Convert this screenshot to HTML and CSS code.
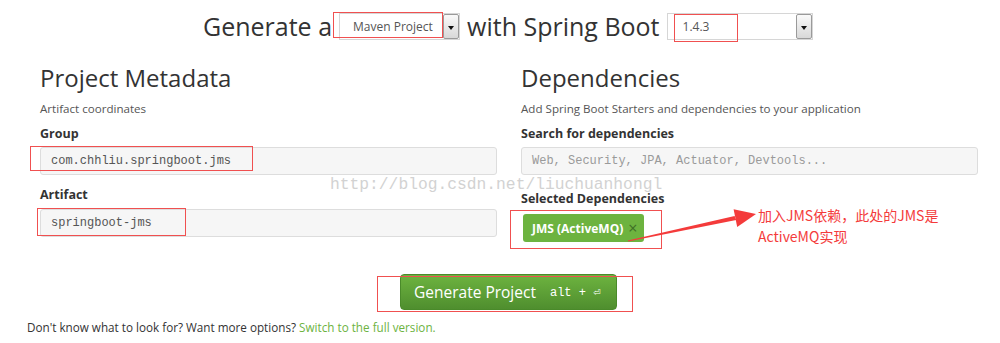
FILE: index.html
```html
<!DOCTYPE html>
<html lang="en">
<head>
  <meta charset="UTF-8" />
  <title>Spring Initializr</title>
  <link rel="stylesheet" href="styles.css">
</head>
<body>

  <div class="title">
    <span>Generate a</span>
    <div class="fake-select maven">
      <span class="value">Maven Project</span>
      <span class="arrow"></span>
    </div>
    <span>with Spring Boot</span>
    <div class="fake-select boot">
      <span class="value">1.4.3</span>
      <span class="arrow"></span>
    </div>
  </div>

  <div class="columns">
    <div class="col">
      <h1>Project Metadata</h1>
      <p class="hint">Artifact coordinates</p>
      <label class="field-label">Group</label>
      <div class="input">com.chhliu.springboot.jms</div>
      <label class="field-label second">Artifact</label>
      <div class="input artifact">springboot-jms</div>
    </div>
    <div class="col">
      <h1>Dependencies</h1>
      <p class="hint">Add Spring Boot Starters and dependencies to your application</p>
      <label class="field-label">Search for dependencies</label>
      <div class="input placeholder">Web, Security, JPA, Actuator, Devtools...</div>
      <label class="field-label selected">Selected Dependencies</label>
      <div class="tags">
        <span class="tag">JMS (ActiveMQ) <span class="close">×</span></span>
      </div>
    </div>
  </div>

  <div class="actions">
    <button class="generate"><span>Generate Project</span><span class="kbd">alt + ⏎</span></button>
  </div>

  <p class="footer">Don't know what to look for? Want more options? <a href="#">Switch to the full version.</a></p>

  <!-- annotations drawn over the screenshot -->
  <div class="watermark">http://blog.csdn.net/liuchuanhongl</div>
  <div class="mark m-maven"></div>
  <div class="mark m-boot"></div>
  <div class="mark m-group"></div>
  <div class="mark m-artifact"></div>
  <div class="mark m-tag"></div>
  <div class="mark m-button"></div>
  <svg class="arrow-svg" width="1000" height="343" viewBox="0 0 1000 343">
    <polygon points="628.1,241.5 627.9,240.5 734.6,216.1 736.2,220.1" fill="#f43b3b" />
    <polygon points="733.6,209.3 756,214 737.2,226.9" fill="#f43b3b" />
  </svg>
  <div class="note">加入JMS依赖，此处的JMS是<br>ActiveMQ实现</div>

</body>
</html>
```

FILE: styles.css
```css
body {
  margin: 0;
  font-family: 'Open Sans', sans-serif;
  color: #333;
  background: #fff;
  width: 1000px;
  height: 343px;
  position: relative;
  overflow: hidden;
}

.title {
  display: flex;
  align-items: center;
  margin-top: 12px;
  height: 28px;
  padding-left: 203px;
  font-size: 25px;
  color: #333;
}

.fake-select {
  display: flex;
  height: 27px;
  border: 1px solid #d6d6d6;
  box-sizing: border-box;
  background: #fff;
  font-size: 12px;
  color: #555;
}

.fake-select .value {
  flex: 1;
  display: flex;
  align-items: center;
  padding-left: 13px;
}

.fake-select .arrow {
  width: 14px;
  border: 1px solid #9a9a9a;
  border-radius: 2px;
  background: linear-gradient(#fafafa, #d8d8d8);
  position: relative;
}

.fake-select .arrow::after {
  content: "";
  position: absolute;
  left: 4px;
  top: 11px;
  border-left: 3px solid transparent;
  border-right: 3px solid transparent;
  border-top: 4px solid #111;
}

.maven {
  width: 121px;
  margin: 0 7px 0 7px;
}

.boot {
  width: 146px;
  margin-left: 7px;
}

.boot .value {
  padding-left: 15px;
}

.columns {
  display: grid;
  grid-template-columns: 457px 457px;
  column-gap: 24px;
  padding-left: 40px;
  margin-top: 24px;
}

h1 {
  margin: 0;
  font-size: 24px;
  line-height: 28px;
  font-weight: 400;
  color: #333;
}

.hint {
  margin: 9px 0 0;
  font-size: 11.6px;
  line-height: 16px;
  color: #555;
}

.field-label {
  display: block;
  margin-top: 9px;
  font-size: 12.5px;
  line-height: 16px;
  font-weight: 700;
  color: #333;
}

.field-label.second {
  margin-top: 12px;
}

.field-label.selected {
  margin-top: 16px;
}

.input {
  margin-top: 5px;
  height: 28px;
  box-sizing: border-box;
  border: 1px solid #ddd;
  border-radius: 3px;
  background: #f6f6f6;
  padding-left: 10px;
  display: flex;
  align-items: center;
  font-family: 'Liberation Mono', monospace;
  font-size: 12px;
  color: #555;
}

.input.artifact {
  margin-top: 6px;
}

.input.placeholder {
  color: #9a9a9a;
}

.tags {
  margin-top: 7px;
  padding-left: 2px;
}

.tag {
  display: inline-flex;
  align-items: center;
  height: 28px;
  padding: 0 7px 0 9px;
  border-radius: 3px;
  background: #6db33f;
  color: #fff;
  font-size: 12px;
  font-weight: 700;
}

.tag .close {
  margin-left: 5px;
  font-size: 16px;
  font-weight: 400;
  color: #3f6f26;
}

.actions {
  display: flex;
  justify-content: center;
  padding-left: 17px;
  margin-top: 32px;
}

.generate {
  display: flex;
  align-items: center;
  gap: 14px;
  width: 217px;
  height: 36px;
  border: 1px solid #4a8a2a;
  border-radius: 4px;
  background: linear-gradient(#6db33f, #4f8e2e);
  color: #fff;
  font-family: 'Open Sans', sans-serif;
  font-size: 15.5px;
  padding: 0 0 0 13px;
  white-space: nowrap;
  cursor: pointer;
}

.generate .kbd {
  font-family: 'Liberation Mono', 'DejaVu Sans Mono', monospace;
  font-size: 12px;
}

.footer {
  margin: 9px 0 0 27px;
  font-size: 11.7px;
  line-height: 16px;
  color: #333;
}

.footer a {
  color: #6db33f;
  text-decoration: none;
}

/* overlays */
.watermark {
  position: absolute;
  left: 330px;
  top: 175px;
  font-family: 'Liberation Mono', monospace;
  font-size: 16.3px;
  color: #d2d2d2;
  pointer-events: none;
}

.mark {
  position: absolute;
  border: 1px solid #f05050;
  box-sizing: border-box;
}

.m-maven { left: 333px; top: 12px; width: 110px; height: 26px; }
.m-boot { left: 674px; top: 14px; width: 64px; height: 28px; }
.m-group { left: 30px; top: 146px; width: 223px; height: 25px; }
.m-artifact { left: 37px; top: 208px; width: 149px; height: 28px; }
.m-tag { left: 510px; top: 210px; width: 152px; height: 39px; }
.m-button { left: 377px; top: 276px; width: 256px; height: 36px; }

.arrow-svg {
  position: absolute;
  left: 0;
  top: 0;
}

.note {
  position: absolute;
  left: 758px;
  top: 205px;
  font-family: 'Noto Sans CJK SC', sans-serif;
  font-size: 14px;
  line-height: 21px;
  color: #f43b3b;
}
```
